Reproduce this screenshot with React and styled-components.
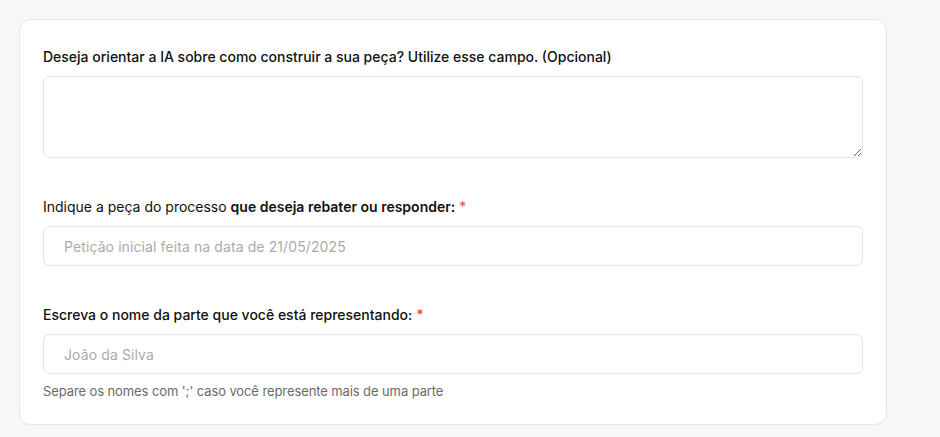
import React from 'react';
import styled, { createGlobalStyle } from 'styled-components';

const GlobalStyle = createGlobalStyle`
  html, body {
    margin: 0;
    padding: 0;
    background: #f7f7f7;
    font-family: Inter, "Noto Sans", "Liberation Sans", sans-serif;
    color: #111;
  }
  * { box-sizing: border-box; }
`;

const Page = styled.div`
  width: 940px;
  min-height: 437px;
  padding: 19px 53px 12px 19px;
`;

const Card = styled.section`
  background: #fff;
  border: 1px solid #e6e6e6;
  border-radius: 12px;
  padding: 27px 23px 24px;
  display: flex;
  flex-direction: column;
  gap: 39px;
`;

const Field = styled.div`
  display: flex;
  flex-direction: column;
`;

const Label = styled.label`
  font-size: 14px;
  line-height: 20px;
  font-weight: ${p => (p.$plain ? 400 : 500)};
  color: #111;
  margin-bottom: 9px;

  strong {
    font-weight: 600;
  }
`;

const Required = styled.span`
  color: #ef4444;
  margin-left: 4px;
`;

const TextArea = styled.textarea`
  width: 100%;
  height: 82px;
  border: 1px solid #e5e5e5;
  border-radius: 6px;
  padding: 10px 20px;
  font: inherit;
  font-size: 14px;
  resize: vertical;
  outline: none;
  background: #fff;
`;

const Input = styled.input`
  width: 100%;
  height: 40px;
  border: 1px solid #e5e5e5;
  border-radius: 6px;
  padding: 0 20px;
  font-family: inherit;
  font-size: 14px;
  letter-spacing: 0.1px;
  color: #111;
  outline: none;
  background: #fff;

  &::placeholder {
    color: #ababab;
  }
`;

const Hint = styled.p`
  margin: 8px 0 0;
  font-size: 13px;
  letter-spacing: -0.1px;
  line-height: 18px;
  color: #6b6b6b;
`;

export default function App() {
  return (
    <>
      <GlobalStyle />
      <Page>
        <Card>
          <Field>
            <Label>
              Deseja orientar a IA sobre como construir a sua peça? Utilize esse campo. (Opcional)
            </Label>
            <TextArea />
          </Field>

          <Field>
            <Label $plain>
              Indique a peça do processo <strong>que deseja rebater ou responder:</strong>
              <Required>*</Required>
            </Label>
            <Input placeholder="Petição inicial feita na data de 21/05/2025" />
          </Field>

          <Field>
            <Label>
              Escreva o nome da parte que você está representando:
              <Required>*</Required>
            </Label>
            <Input placeholder="João da Silva" />
            <Hint>Separe os nomes com ';' caso você represente mais de uma parte</Hint>
          </Field>
        </Card>
      </Page>
    </>
  );
}
